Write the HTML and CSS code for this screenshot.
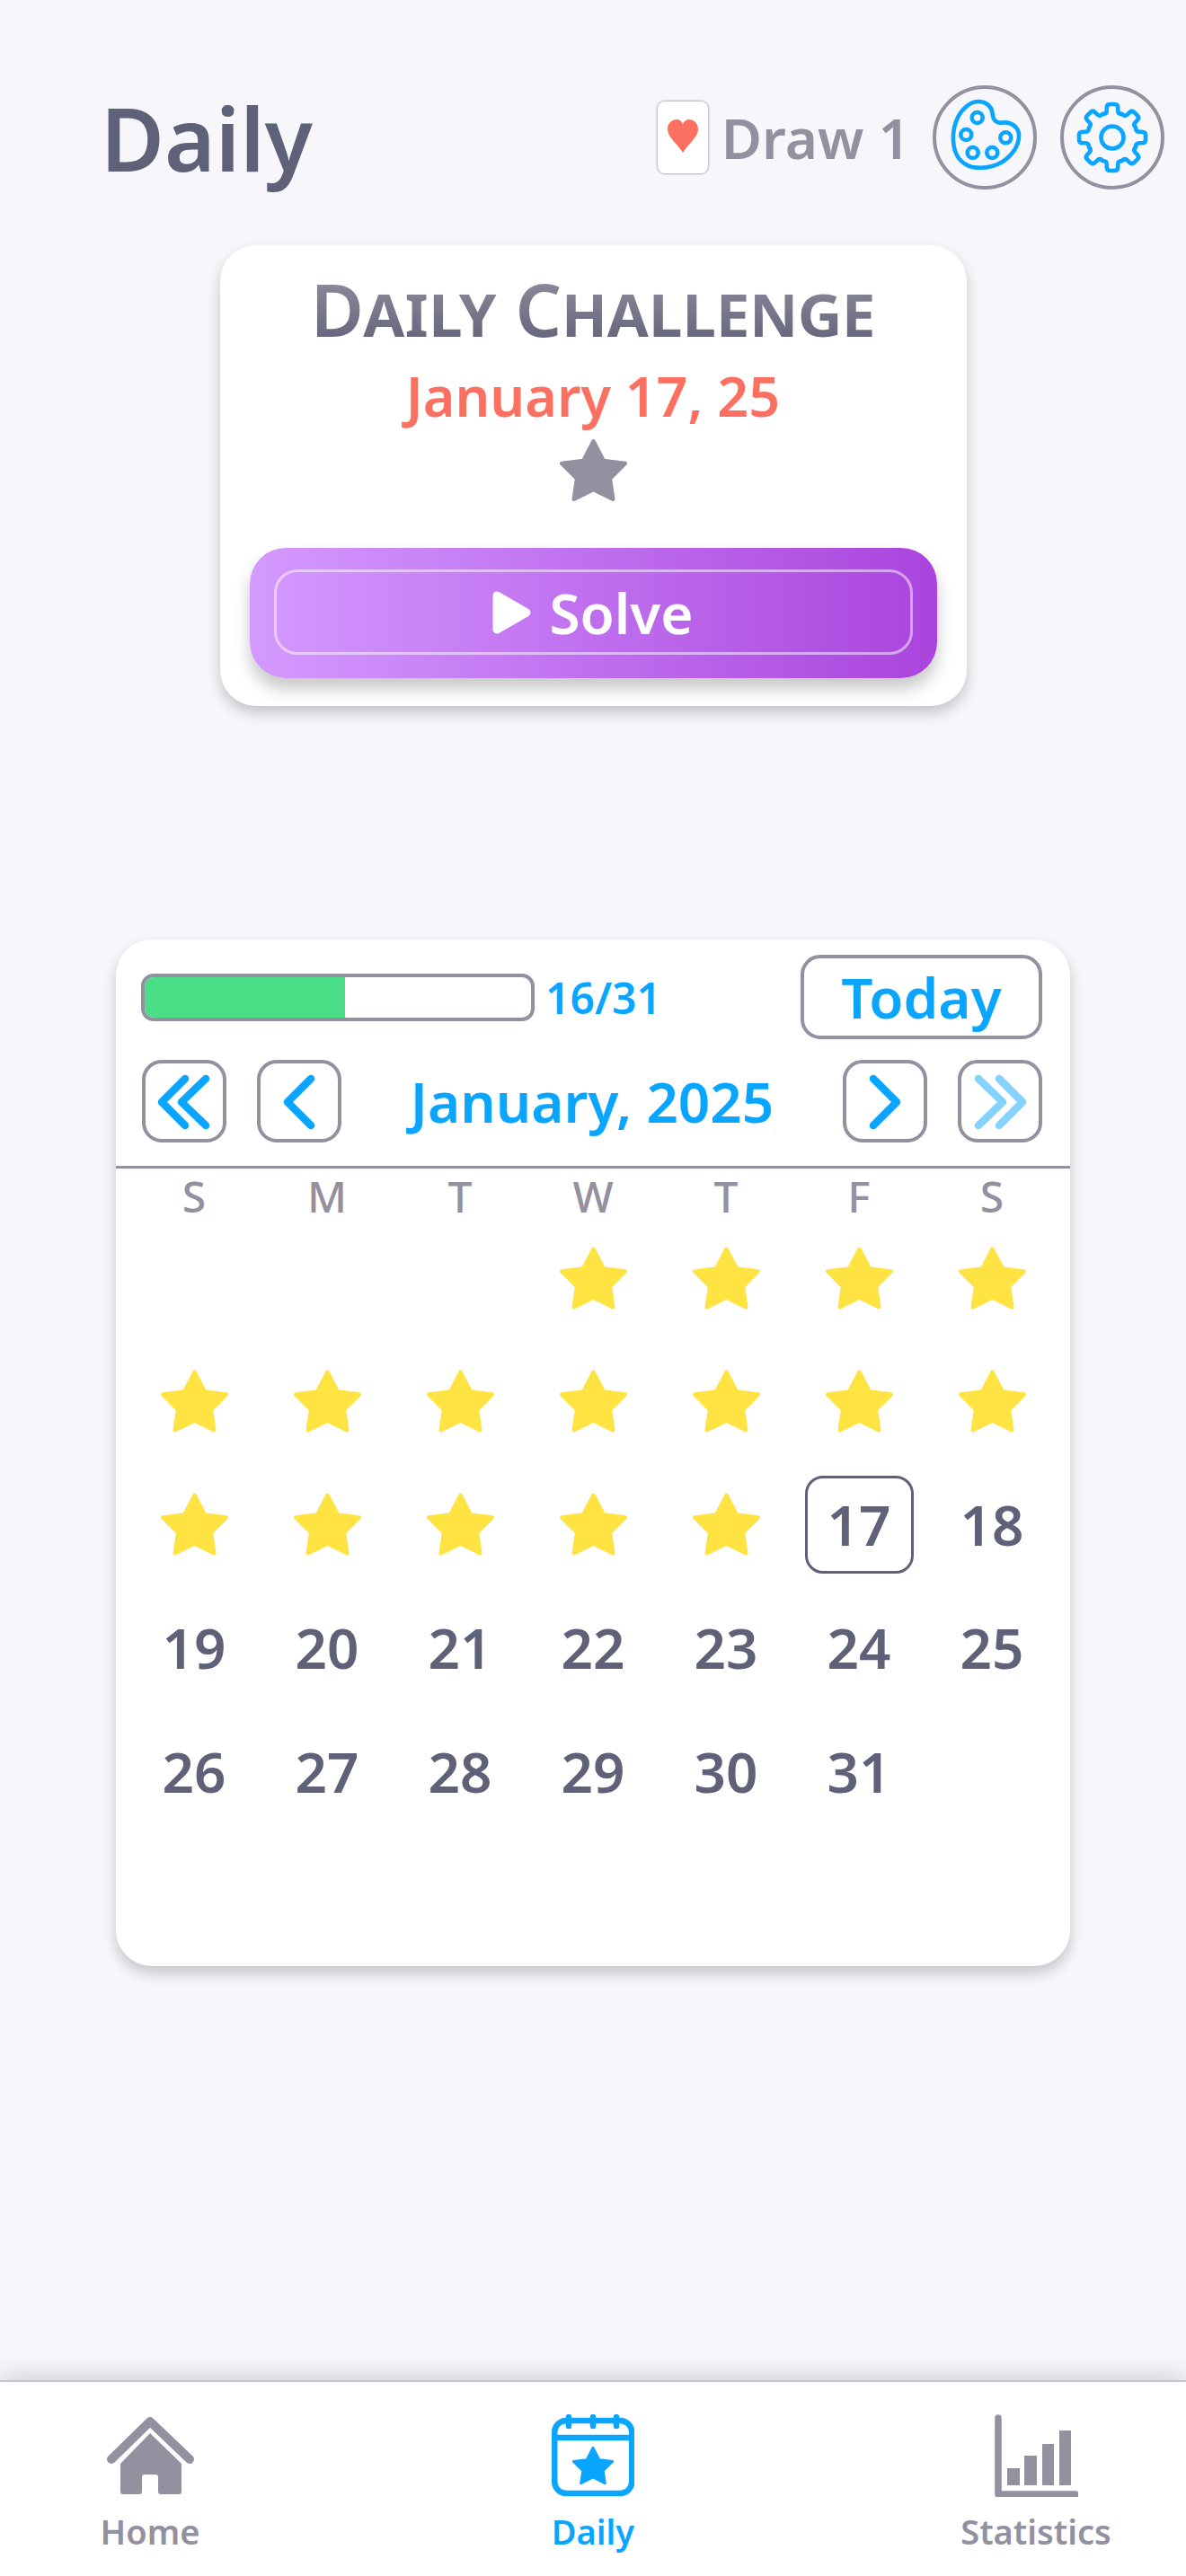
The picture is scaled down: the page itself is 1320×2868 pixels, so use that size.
FILE: index.html
```html
<!DOCTYPE html>
<html lang="en">
<head>
    <meta charset="UTF-8">
    <meta name="viewport" content="width=device-width, initial-scale=1.0">
    <title>Daily</title>
    <link rel="stylesheet" href="styles.css">
</head>
<body>
    <svg class="defs" xmlns="http://www.w3.org/2000/svg">
        <symbol id="star" viewBox="0 0 100 92">
            <polygon points="50,3 65,32 97,36 74.500,58.500 79,89 50,74.500 21,89 25.500,58.500 3,36 35,32" fill="currentColor" stroke="currentColor" stroke-width="6" stroke-linejoin="round"/>
        </symbol>
        <path id="tooth" d="M-10.7 -26 Q-6.2 -26 -6.2 -30 V-33 Q-6.2 -37 -2.5 -37 H2.5 Q6.2 -37 6.2 -33 V-30 Q6.2 -26 10.7 -26" fill="none" stroke="currentColor" stroke-width="4.6" stroke-linecap="round" stroke-linejoin="round"/>
    </svg>

    <header class="header">
        <h1 class="page-title">Daily</h1>
        <div class="draw-card">
            <svg viewBox="0 0 56 80" width="56" height="80">
                <path d="M28 57 C22 47 11 40 11 31 C11 24 16 20 21 20 C24 20 27 22 28 25 C29 22 32 20 35 20 C40 20 45 24 45 31 C45 40 34 47 28 57Z" fill="#fb7061"/>
            </svg>
        </div>
        <span class="draw-label">Draw 1</span>
        <div class="round-btn">
            <svg viewBox="4 4 108 108" width="108" height="108" fill="none" stroke="currentColor" stroke-width="4.6">
                <path d="M51 18 C58 18 64 22 66 28 C67 34 67 39 72 41 C76 43 80 40 85 42 C92 44 97 50 96 58 C95 68 88 78 78 85 C68 91 56 93 44 91 C32 88 24 78 23 62 C22 46 28 32 36 25 C40 21 45 18 51 18 Z"/>
                <circle cx="49.7" cy="36" r="6"/>
                <circle cx="37.3" cy="55" r="6"/>
                <circle cx="44.7" cy="75" r="6"/>
                <circle cx="66.3" cy="75" r="6"/>
                <circle cx="81.3" cy="58.3" r="6"/>
            </svg>
        </div>
        <div class="round-btn">
            <svg viewBox="4 4 108 108" width="108" height="108">
                <g transform="translate(58 58)">
                    <use href="#tooth"/>
                    <use href="#tooth" transform="rotate(45)"/>
                    <use href="#tooth" transform="rotate(90)"/>
                    <use href="#tooth" transform="rotate(135)"/>
                    <use href="#tooth" transform="rotate(180)"/>
                    <use href="#tooth" transform="rotate(225)"/>
                    <use href="#tooth" transform="rotate(270)"/>
                    <use href="#tooth" transform="rotate(315)"/>
                    <circle r="12.5" fill="none" stroke="currentColor" stroke-width="4.6"/>
                </g>
            </svg>
        </div>
    </header>

    <section class="challenge-card">
        <h2 class="challenge-title">Daily Challenge</h2>
        <div class="challenge-date">January 17, 25</div>
        <svg class="challenge-star"><use href="#star"/></svg>
        <div class="solve-btn">
            <div class="solve-inner">
                <svg viewBox="0 0 43 48" width="43" height="48">
                    <path d="M5 5 L38 24 L5 43 Z" fill="#fff" stroke="#fff" stroke-width="9" stroke-linejoin="round"/>
                </svg>
                <span>Solve</span>
            </div>
        </div>
    </section>

    <section class="calendar-card">
        <div class="progress-row">
            <div class="progress-bar"><div class="progress-fill" style="width: 51.8%"></div></div>
            <span class="progress-text">16/31</span>
            <div class="today-btn">Today</div>
        </div>
        <div class="month-row">
            <div class="nav-btn">
                <svg viewBox="0 0 94 92" width="94" height="92"><path d="M48 21 L22 47 L48 73 M71 21 L44 47 L71 73"/></svg>
            </div>
            <div class="nav-btn">
                <svg viewBox="0 0 94 92" width="94" height="92"><path d="M60 21 L34 47 L60 73"/></svg>
            </div>
            <div class="month-label">January, 2025</div>
            <div class="nav-btn">
                <svg viewBox="0 0 94 92" width="94" height="92"><path d="M34 21 L60 47 L34 73"/></svg>
            </div>
            <div class="nav-btn nav-btn-off">
                <svg viewBox="0 0 94 92" width="94" height="92"><path d="M46 21 L72 47 L46 73 M23 21 L50 47 L23 73"/></svg>
            </div>
        </div>
        <div class="weekdays">
            <span>S</span><span>M</span><span>T</span><span>W</span><span>T</span><span>F</span><span>S</span>
        </div>
        <div class="days">
            <div class="day"></div>
            <div class="day"></div>
            <div class="day"></div>
            <div class="day"><svg class="day-star"><use href="#star"/></svg></div>
            <div class="day"><svg class="day-star"><use href="#star"/></svg></div>
            <div class="day"><svg class="day-star"><use href="#star"/></svg></div>
            <div class="day"><svg class="day-star"><use href="#star"/></svg></div>

            <div class="day"><svg class="day-star"><use href="#star"/></svg></div>
            <div class="day"><svg class="day-star"><use href="#star"/></svg></div>
            <div class="day"><svg class="day-star"><use href="#star"/></svg></div>
            <div class="day"><svg class="day-star"><use href="#star"/></svg></div>
            <div class="day"><svg class="day-star"><use href="#star"/></svg></div>
            <div class="day"><svg class="day-star"><use href="#star"/></svg></div>
            <div class="day"><svg class="day-star"><use href="#star"/></svg></div>

            <div class="day"><svg class="day-star"><use href="#star"/></svg></div>
            <div class="day"><svg class="day-star"><use href="#star"/></svg></div>
            <div class="day"><svg class="day-star"><use href="#star"/></svg></div>
            <div class="day"><svg class="day-star"><use href="#star"/></svg></div>
            <div class="day"><svg class="day-star"><use href="#star"/></svg></div>
            <div class="day"><span class="day-today">17</span></div>
            <div class="day">18</div>

            <div class="day">19</div>
            <div class="day">20</div>
            <div class="day">21</div>
            <div class="day">22</div>
            <div class="day">23</div>
            <div class="day">24</div>
            <div class="day">25</div>

            <div class="day">26</div>
            <div class="day">27</div>
            <div class="day">28</div>
            <div class="day">29</div>
            <div class="day">30</div>
            <div class="day">31</div>
        </div>
    </section>

    <nav class="tabbar">
        <div class="tab">
            <svg viewBox="0 0 97 92" width="97" height="92">
                <path d="M5 50 L48 8 L92 50" fill="none" stroke="currentColor" stroke-width="10" stroke-linecap="round" stroke-linejoin="round"/>
                <path d="M48 21 L83 55 V86 Q83 89 80 89 H60 Q57 89 57 86 V70 Q57 67 54 67 H42 Q39 67 39 70 V86 Q39 89 36 89 H18 Q15 89 15 86 V55 Z" fill="currentColor"/>
            </svg>
            <span>Home</span>
        </div>
        <div class="tab tab-active">
            <svg viewBox="0 0 92 92" width="92" height="92" fill="none" stroke="currentColor" stroke-width="6.5" stroke-linecap="round">
                <rect x="3.2" y="7" width="86" height="81" rx="13"/>
                <path d="M3 26 H89 M19 3 V13 M46 3 V13 M72 3 V13"/>
                <use href="#star" x="23" y="35" width="46" height="44" stroke="none"/>
            </svg>
            <span>Daily</span>
        </div>
        <div class="tab">
            <svg viewBox="0 0 93 92" width="93" height="92" fill="currentColor">
                <path d="M4 4 V89 H90" fill="none" stroke="currentColor" stroke-width="7.5" stroke-linecap="round" stroke-linejoin="round"/>
                <rect x="14" y="60" width="14" height="19"/>
                <rect x="33" y="46" width="14" height="33"/>
                <rect x="53" y="33" width="13" height="46"/>
                <rect x="72" y="18" width="13" height="61"/>
            </svg>
            <span>Statistics</span>
        </div>
    </nav>
</body>
</html>
```

FILE: styles.css
```css
body {
    font-family: "Noto Sans", "Open Sans", sans-serif;
    font-weight: 600;
    margin: 0;
    height: 2868px;
    display: flex;
    flex-direction: column;
    background: #f6f6fb;
    color: #5f6178;
    overflow: hidden;
}
.defs {
    display: none;
}

/* Шапка */
.header {
    display: flex;
    align-items: center;
    padding: 95px 24px 0 112px;
}
.page-title {
    font-size: 97px;
    font-weight: 600;
    line-height: 116px;
    margin: 0 auto 0 0;
}
.draw-card {
    width: 56px;
    height: 80px;
    box-sizing: border-box;
    background: #fff;
    border-radius: 8px;
    box-shadow: 0 0 2px 1px rgba(90, 88, 105, 0.45);
    display: flex;
    justify-content: center;
    margin-right: 15px;
}
.draw-card svg {
    flex: none;
}
.draw-label {
    font-size: 62px;
    color: #9390a0;
    margin-right: 25px;
}
.round-btn {
    width: 116px;
    height: 116px;
    box-sizing: border-box;
    border: 4px solid #9390a0;
    border-radius: 50%;
    color: #0aa5ff;
    margin-left: 26px;
}
.draw-label + .round-btn {
    margin-left: 0;
}

/* Карточка задания */
.challenge-card {
    width: 831px;
    height: 513px;
    box-sizing: border-box;
    margin: 62px auto 0;
    padding: 26px 33px 0;
    background: #fff;
    border-radius: 40px;
    box-shadow: 0 8px 16px rgba(0, 0, 0, 0.2);
    display: flex;
    flex-direction: column;
    align-items: center;
}
.challenge-title {
    font-size: 81px;
    font-weight: 600;
    font-variant: small-caps;
    line-height: 90px;
    margin: 0;
    background: linear-gradient(#9390a0, #5f6178);
    -webkit-background-clip: text;
    background-clip: text;
    color: transparent;
}
.challenge-date {
    font-size: 61px;
    line-height: 76px;
    margin-top: 14px;
    color: #fb7061;
}
.challenge-star {
    width: 75px;
    height: 71px;
    margin-top: 9px;
    color: #9390a0;
}
.solve-btn {
    width: 100%;
    height: 145px;
    box-sizing: border-box;
    margin-top: 51px;
    padding: 24px 27px 26px;
    border-radius: 40px;
    background: linear-gradient(90deg, #d49aff, #aa44dd);
    box-shadow: 0 12px 18px rgba(0, 0, 0, 0.22);
}
.solve-inner {
    height: 100%;
    box-sizing: border-box;
    border: 3px solid rgba(255, 255, 255, 0.5);
    border-radius: 26px;
    display: flex;
    justify-content: center;
    align-items: center;
    gap: 20px;
    color: #fff;
    font-size: 62px;
}

/* Календарь */
.calendar-card {
    width: 1062px;
    height: 1143px;
    box-sizing: border-box;
    margin: 260px auto 0;
    padding-top: 17px;
    background: #fff;
    border-radius: 40px;
    box-shadow: 0 8px 16px rgba(0, 0, 0, 0.2);
}
.progress-row {
    display: flex;
    align-items: center;
    padding: 0 31px 0 28px;
}
.progress-bar {
    width: 438px;
    height: 53px;
    box-sizing: border-box;
    border: 4px solid #9390a0;
    border-radius: 14px;
    overflow: hidden;
}
.progress-fill {
    height: 100%;
    background: #4ade86;
}
.progress-text {
    font-size: 48px;
    color: #0aa5ff;
    margin-left: 12px;
}
.today-btn {
    width: 269px;
    height: 94px;
    box-sizing: border-box;
    border: 4px solid #9390a0;
    border-radius: 22px;
    margin-left: auto;
    display: flex;
    justify-content: center;
    align-items: center;
    font-size: 62px;
    color: #0aa5ff;
}
.month-row {
    display: flex;
    align-items: center;
    padding: 0 31px 0 29px;
    margin-top: 23px;
    gap: 34px;
}
.month-label {
    flex: 1;
    text-align: center;
    font-size: 62px;
    color: #0aa5ff;
}
.nav-btn {
    width: 94px;
    height: 92px;
    box-sizing: border-box;
    border: 4px solid #9390a0;
    border-radius: 22px;
}
.nav-btn svg {
    margin: -4px;
    display: block;
    fill: none;
    stroke: #0aa5ff;
    stroke-width: 8.5;
    stroke-linecap: round;
    stroke-linejoin: round;
}
.nav-btn-off svg {
    stroke: #85d2ff;
}
.weekdays {
    display: grid;
    grid-template-columns: repeat(7, 148px);
    padding-left: 13px;
    margin-top: 26px;
    padding-top: 9px;
    border-top: 3px solid #9390a0;
    font-size: 48px;
    font-weight: 500;
    line-height: 44px;
    text-align: center;
    color: #9390a0;
}
.days {
    display: grid;
    grid-template-columns: repeat(7, 148px);
    grid-template-rows: repeat(6, 137.25px);
    padding-left: 13px;
    font-size: 62px;
}
.day {
    display: flex;
    justify-content: center;
    align-items: center;
}
.day-star {
    width: 75px;
    height: 70px;
    color: #ffe342;
}
.day-today {
    width: 121px;
    height: 109px;
    box-sizing: border-box;
    border: 3px solid #5f6178;
    border-radius: 20px;
    display: flex;
    justify-content: center;
    align-items: center;
}

/* Нижняя панель */
.tabbar {
    margin-top: auto;
    height: 218px;
    box-sizing: border-box;
    padding-top: 36px;
    border-top: 2px solid #c6c5cd;
    background: #fff;
    box-shadow: 0 -6px 24px rgba(0, 0, 0, 0.15);
    display: grid;
    grid-template-columns: repeat(3, 200px);
    justify-content: center;
    column-gap: 293px;
}
.tab {
    display: flex;
    flex-direction: column;
    align-items: center;
    color: #9390a0;
    font-size: 38px;
    line-height: 50px;
    gap: 13px;
}
.tab-active {
    color: #0aa5ff;
}
```
